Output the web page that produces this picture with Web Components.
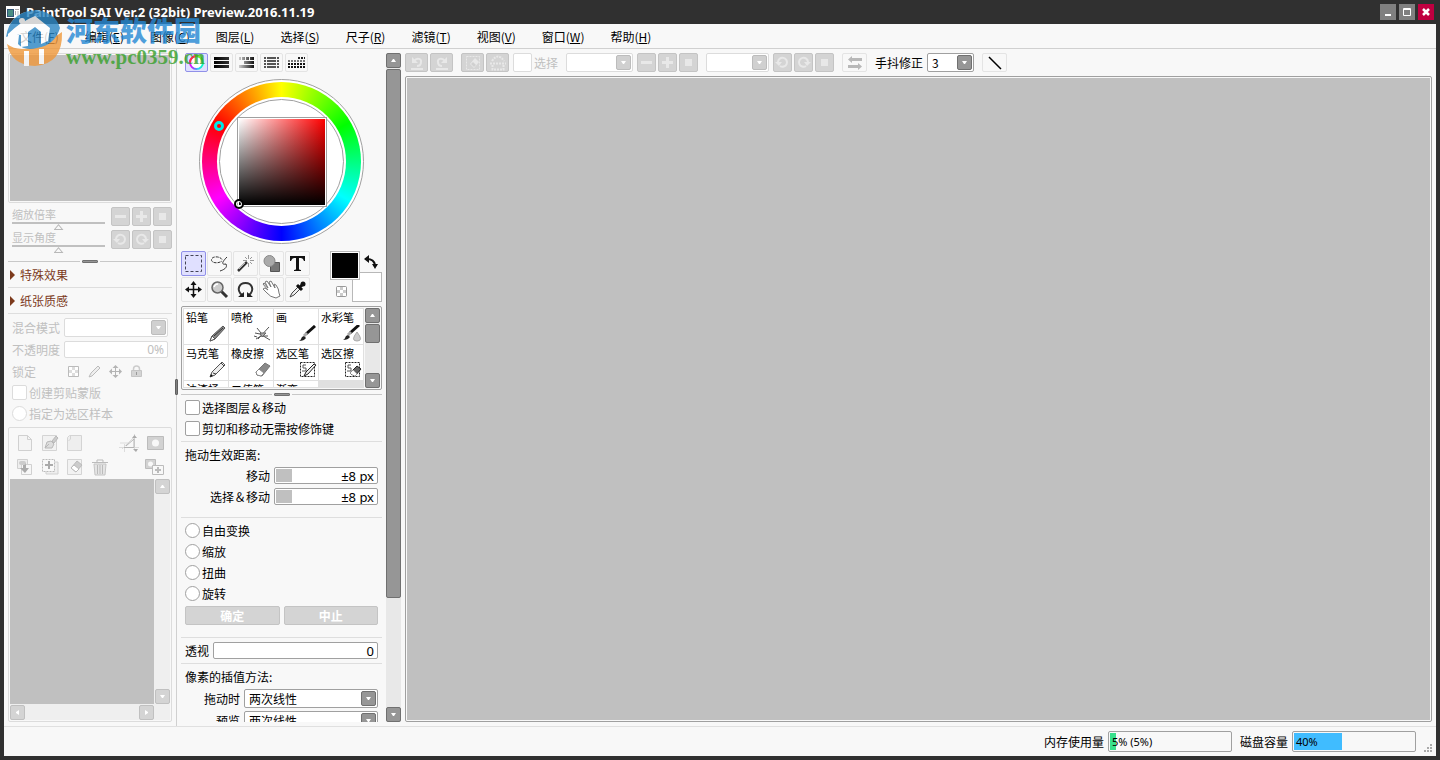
<!DOCTYPE html>
<html lang="zh-CN">
<head>
<meta charset="utf-8">
<title>PaintTool SAI Ver.2</title>
<style>
    html, body {
        height: 100%;
        margin: 0;
    }

    body {
        background: #303030;
        font-family: "Noto Sans CJK SC", sans-serif;
        font-size: 12px;
        overflow: hidden;
    }
</style>
</head>
<body>
<sai-window></sai-window>

<script>
// name: [width, height, svg body]
const ICONS = {
    app: [14, 12, '<path d="M0 0h14v12H0z" fill="#fff"/><path d="M1 3h7v8H1z" fill="#357"/><path d="M2 4h5v6H2z" fill="#4a8d83"/><path d="M9 3h4v1H9zM9 5h1v4H9z" fill="#aaa"/><path d="M11 5h2v6h-2z" fill="#ddd"/>'],
    min: [16, 16, '<path d="M5 10h6v2H5z" fill="#fff"/>'],
    max: [16, 16, '<path d="M4.5 4.5h7v7h-7zM4 5.5h8" fill="none" stroke="#fff"/>'],
    close: [16, 16, '<path d="M5 5l6 6M11 5l-6 6" stroke="#fff" stroke-width="2.5"/>'],
    ring: [19, 17, '<defs><linearGradient id="a" x2="1" y2="0"><stop stop-color="#e0f"/><stop offset=".3" stop-color="#85f"/><stop offset=".6" stop-color="#3cf"/><stop offset="1" stop-color="#0fb"/></linearGradient></defs><circle cx="9.5" cy="8.5" r="6.5" fill="#fff" stroke="url(#a)" stroke-width="2"/><path d="M3 8.5A6.500 6.500 0 0 1 9 2" fill="none" stroke="#f34" stroke-width="2"/><path d="M9 2a6.5 6.5 0 0 1 6 4" fill="none" stroke="#7e2" stroke-width="2"/>'],
    bars: [17, 13, '<defs><linearGradient id="a"><stop stop-color="#000"/><stop offset="1" stop-color="#333"/></linearGradient></defs><path d="M1 1h15v3H1zM1 5h15v3H1zM1 9h15v3H1z" fill="url(#a)"/>'],
    mixer: [17, 13, '<defs><linearGradient id="a"><stop stop-color="#ccc"/><stop offset="1" stop-color="#111"/></linearGradient></defs><path d="M1 1h15v3H1zM1 5h15v3H1zM1 9h15v3H1z" fill="url(#a)"/><path d="M3 1h1v3H3zM7 1h1v3H7zM11 1h1v3h-1zM1 5h5v3H1z" fill="#f8f8f8"/>'],
    gridlines: [17, 13, '<path d="M1 2h15M1 5h15M1 8h15M1 11h15" stroke="#555" stroke-width="2" stroke-dasharray="2 1 9 1 2 1"/>'],
    swatches: [17, 13, '<path d="M10 2h7" stroke="#222" stroke-width="2" stroke-dasharray="2 1"/><path d="M0 5h17" stroke="#777" stroke-width="2" stroke-dasharray="2 1"/><path d="M0 8h17M0 11h17" stroke="#111" stroke-width="2" stroke-dasharray="2 1"/>'],
    undo: [18, 16, '<path d="M4 2v6h6z" fill="#e8e8e8"/><path d="M6 6c3-4 8-2 7 1 0 3-2 4-4 4M3 14h12" fill="none" stroke="#e8e8e8" stroke-width="2"/>'],
    redo: [18, 16, '<path d="M14 2v6H8z" fill="#e8e8e8"/><path d="M12 6C9 2 4 4 5 7c0 3 2 4 4 4M3 14h12" fill="none" stroke="#e8e8e8" stroke-width="2"/>'],
    deselect: [18, 16, '<path d="M2.5 1.5h13v13h-13z" fill="none" stroke="#e8e8e8" stroke-dasharray="2 1"/><path d="M6 9l5-6 4 4-5 6z" fill="#e8e8e8"/><path d="M7 9l2-2 3 3-2 2z" fill="#d0d0d0"/>'],
    invert: [18, 16, '<path d="M1 8.500h16M3 6q6-9 12 0M3.5 10v4.500h11V10" fill="none" stroke="#e8e8e8" stroke-width="2" stroke-dasharray="2 1"/>'],
    minus: [15, 15, '<path d="M2 6h11v3H2z" fill="#e8e8e8"/>'],
    plus: [15, 15, '<path d="M2 6h11v3H2zM6 2h3v11H6z" fill="#e8e8e8"/>'],
    square: [15, 15, '<path d="M4 4h7v7H4z" fill="#e8e8e8"/>'],
    ccw: [15, 15, '<path d="M3 7a4.5 4.5 0 1 1 2 4" fill="none" stroke="#e8e8e8" stroke-width="2"/><path d="M0 7h7l-3 4z" fill="#e8e8e8"/>'],
    cw: [15, 15, '<path d="M12 7a4.5 4.5 0 1 0-2 4" fill="none" stroke="#e8e8e8" stroke-width="2"/><path d="M8 7h7l-4 4z" fill="#e8e8e8"/>'],
    swaparrows: [16, 14, '<path d="M5 0v2h10v3H5v2L1 3.500zM11 7v2H1v3h10v2l4-3.500z" fill="#b8b8b8"/>'],
    line: [16, 14, '<path d="M2 1l12 12" stroke="#000" stroke-width="1.5"/>'],
    select: [19, 19, '<path d="M1.5 1.5h16v16h-16z" fill="none" stroke="#445" stroke-dasharray="3 2"/>'],
    lasso: [19, 19, '<path d="M12 5.5C10 2 2 2 1.5 5.5S8 10 12 7" fill="none" stroke="#333" stroke-dasharray="3 1"/><path d="M17 3c-5 5-6 8-1 7 2 4-3 6-6 7" fill="none" stroke="#333"/>'],
    wand: [19, 19, '<path d="M2 17L11 8" stroke="#333" stroke-width="2.5"/><path d="M3 15l6-6" stroke="#bbb"/><path d="M12.5 1v4M12.5 9v4M7 6.5h4M14 6.5h4M9 3l2 2M16 3l-2 2M16 10l-2-2" stroke="#999"/>'],
    shapes: [19, 19, '<path d="M8.5 8.5h9v9h-9z" fill="#777" stroke="#555"/><circle cx="7.5" cy="7" r="5.5" fill="#aaa" stroke="#888"/>'],
    text: [19, 19, '<path d="M2 2h15v5h-1q-1-3-3-3h-2v11q0 1 2 1v1H6v-1q2 0 2-1V4H6Q4 4 3 7H2z" fill="#111"/>'],
    move: [19, 19, '<path d="M9.5 3v13M3 9.5h13" stroke="#111" stroke-width="1.5"/><path d="M9.5 1l3 4h-6zM9.5 18l3-4h-6zM1 9.5l4-3v6zM18 9.5l-4-3v6z" fill="#111"/>'],
    zoom: [19, 19, '<path d="M11 11l6 6" stroke="#333" stroke-width="3"/><circle cx="7.5" cy="7.5" r="5.5" fill="#ccc" stroke="#666" stroke-width="1.5"/><path d="M4 7q1-3 4-3" fill="none" stroke="#fff" stroke-width="1.5"/>'],
    rotate: [19, 19, '<path d="M6 15C0 10 3 3 9.5 3S19 10 13 15" fill="none" stroke="#333" stroke-width="2"/><path d="M2 17h6v-5zM17 17h-6v-5z" fill="#222"/>'],
    hand: [19, 19, '<path d="M2 3l4 5-3-6 2-1 4 6-2-5 2-1 4 7-1-4 2 1q3 4 3 8l1 3-4 2q-6-1-9-5L1 9l2-1 3 2-5-6z" fill="#fff" stroke="#777"/>'],
    picker: [19, 19, '<path d="M2 17l2-4 7-7 2 2-7 7z" fill="#eee" stroke="#444"/><path d="M9 5l5 5M11 8l4-4" stroke="#111" stroke-width="3"/><circle cx="15" cy="4" r="2.5" fill="#111"/>'],
    pencil: [19, 17, '<path d="M2 16l2-5L15 1l2 2L7 14z" fill="#888" stroke="#555"/><path d="M4 11l3 3-5 2z" fill="#fff" stroke="#555"/><path d="M6 11l9-8" stroke="#333"/>'],
    airbrush: [19, 17, '<path d="M2 8l5 1 10 6M5 14L16 2M8 8L4 3M3 14l5-3M1 11l3 1M9 11h6" fill="none" stroke="#555"/><path d="M7 8h6l-4 4z" fill="#aaa" stroke="#666"/>'],
    brush: [19, 17, '<path d="M8 9L17 1" stroke="#111" stroke-width="3"/><path d="M6 11l3-3" stroke="#aaa" stroke-width="3"/><path d="M1 16q2-1 3-4l2-1 2 2q-2 3-7 3" fill="#222"/>'],
    water: [19, 17, '<path d="M7 8L16 0" stroke="#111" stroke-width="3"/><path d="M5 10l3-3" stroke="#aaa" stroke-width="3"/><path d="M0 15q2-1 3-4l2-1 2 2q-2 3-7 3" fill="#222"/><path d="M14 7q-7 9 0 9t0-9" fill="#ccc" stroke="#aaa"/>'],
    marker: [19, 17, '<path d="M2 16l2-5L14 1l3 3L7 14z" fill="#eee" stroke="#555"/><path d="M5 12l3 1M13 2l3 3" stroke="#444"/><path d="M2 16l1-3 2 2z" fill="#111"/>'],
    eraser: [19, 17, '<path d="M3 11L12 2l5 3-8 10-5-1z" fill="#888" stroke="#777"/><path d="M3 11l3-3 5 4-3 3-4-1z" fill="#fff" stroke="#888"/>'],
    selpen: [19, 17, '<path d="M2.5 1.5h14v14h-14z" fill="none" stroke="#222" stroke-dasharray="2 1"/><path d="M8 4H5v3h3v3H4" fill="none" stroke="#555"/><path d="M6 15l2-4 8-8 2 1-8 9z" fill="#eee" stroke="#222"/>'],
    seleraser: [19, 17, '<path d="M2.5 1.5h14v14h-14z" fill="none" stroke="#222" stroke-dasharray="2 1"/><path d="M8 4H5v3h3v3H4" fill="none" stroke="#555"/><path d="M8 11l6-6 4 3-6 7-4-2z" fill="#666" stroke="#222"/><path d="M8 11l2-2 4 4-2 2-4-2z" fill="#fff"/>'],
    swapcolor: [14, 14, '<path d="M3 4q7 0 8 6" fill="none" stroke="#111" stroke-width="2"/><path d="M5 0v8L0 4zM8 9h6l-3 5z" fill="#111"/>'],
    checker: [11, 11, '<path d="M.5.5h10v10H.5z" fill="#fff" stroke="#999"/><path d="M4 1h3v3H4zM1 4h3v3H1zM7 4h3v3H7zM4 7h3v3H4z" fill="#ccc"/>'],
    lockalpha: [13, 13, '<path d="M1.5 1.5h10v10h-10z" fill="#fff" stroke="#bbb"/><path d="M5 2h3v3H5zM2 5h3v3H2zM8 5h3v3H8zM5 8h3v3H5z" fill="#ddd"/>'],
    lockpen: [13, 13, '<path d="M1 12l2-4 7-7 2 2-8 8z" fill="#eee" stroke="#bbb"/>'],
    lockmove: [13, 13, '<path d="M6.5 2v9M2 6.5h9" stroke="#b4b4b4"/><path d="M6.5 0l3 3h-6zM6.5 13l3-3h-6zM0 6.5l3-3v6zM13 6.5l-3-3v6z" fill="#b4b4b4"/>'],
    padlock: [13, 13, '<path d="M3.5 6V4q0-3 3-3t3 3v2" fill="none" stroke="#ccc" stroke-width="1.5"/><path d="M1.5 5.5h10v6h-10z" fill="#d4d4d4" stroke="#c4c4c4"/><path d="M6 7h1v3H6z" fill="#999"/>'],
    page: [18, 18, '<path d="M2.5 1.5h9l4 4v11h-13z" fill="#f4f4f4" stroke="#d0d0d0"/><path d="M11.5 1.5v4h4" fill="none" stroke="#d0d0d0"/>'],
    penpage: [18, 18, '<path d="M1.5 1.5h14v15h-14z" fill="#f2f2f2" stroke="#d4d4d4"/><path d="M4 14l2-6 4-1 3 3-2 4z" fill="#ddd" stroke="#b8b8b8"/><path d="M4 14l4-4M11 7l4-5 2 2-4 5z" fill="#ccc" stroke="#b8b8b8"/>'],
    folder: [18, 18, '<path d="M1.5 3.5l2-2h12v15h-14z" fill="#eee" stroke="#d4d4d4"/><path d="M4.5 2v3l-2 2" fill="none" stroke="#d4d4d4"/>'],
    ruler: [20, 18, '<path d="M0 13.5h20M5.5 10v8M15.5 0v16M3 15L15 3M1 9h9" stroke="#dcdcdc"/><path d="M5 13.5h10v-9M7 12l8-7" fill="none" stroke="#b4b4b4"/><path d="M13 4l2.5-3L18 4zM14 15h5l-2 3z" fill="#aaa"/>'],
    mask: [18, 18, '<path d="M1.5 2.5h16v13h-16z" fill="#d2d2d2" stroke="#bcbcbc"/><circle cx="9.5" cy="9" r="3.5" fill="#f8f8f8"/>'],
    merge: [18, 18, '<path d="M1.5 1.5h10v9h-10z" fill="#eee" stroke="#d0d0d0"/><path d="M5.5 6.5h10v10h-10z" fill="#f6f6f6" stroke="#d0d0d0"/><path d="M7 5h3v5h3l-4 5-5-5h3z" fill="#aaa"/><rect x="3" y="3" width="7" height="4" rx="2" fill="#ccc"/>'],
    addlayer: [18, 18, '<path d="M5 4h12v12H5z" fill="#eee" stroke="#d0d0d0"/><path d="M1.5 1.5h12v12h-12z" fill="#f8f8f8" stroke="#bbb" stroke-dasharray="2 1"/><path d="M4 6h3V3h2v3h3v2H9v3H7V8H4z" fill="#aaa"/>'],
    clearlayer: [18, 18, '<path d="M1.5 1.5h14v15h-14z" fill="#f2f2f2" stroke="#d4d4d4"/><path d="M5 10l6-7 5 4-6 7z" fill="#ccc" stroke="#bbb"/><path d="M5 10l3-3 5 4-3 3z" fill="#fff" stroke="#bbb"/>'],
    trash: [18, 18, '<path d="M3 6h12l-1 11H4z" fill="#e4e4e4" stroke="#c4c4c4"/><path d="M1 4.5h16M6 4V2h6v2M6.5 7v9M9 7v9M11.5 7v9" fill="none" stroke="#bbb"/>'],
    addmask: [20, 18, '<path d="M1.5 1.5h10v9h-10z" fill="#d2d2d2" stroke="#bcbcbc"/><circle cx="6.5" cy="6" r="2.5" fill="#f8f8f8"/><path d="M8.5 7.5h11v9h-11z" fill="#f8f8f8" stroke="#bcbcbc"/><path d="M11 11h2V9h2v2h2v2h-2v2h-2v-2h-2z" fill="#bbb"/>'],
    up: [5, 3, '<path d="M2 0h1l2 3H0z" fill="#fff"/>'],
    down: [5, 3, '<path d="M0 0h5L3 3H2z" fill="#fff"/>'],
    left: [3, 5, '<path d="M0 2v1l3 2V0z" fill="#fff"/>'],
    right: [3, 5, '<path d="M3 2v1L0 5V0z" fill="#fff"/>'],
    grip: [9, 9, '<path d="M6 0h2v2H6zM3 3h2v2H3zM6 3h2v2H6zM0 6h2v2H0zM3 6h2v2H3zM6 6h2v2H6z" fill="#aaa"/>'],
    watermark: [58, 60, '<circle cx="28" cy="30" r="27" fill="#fff"/><path d="M2 36Q20 50 57 24 58 56 30 58 6 57 2 36z" fill="#f0983a"/><path d="M19 43h5v15h-5zM34 41h5v15h-5z" fill="#fff"/><path d="M1 29Q5 3 32 2q19 3 23 18-5 17-23 20-13 3-19-4l1-9q-8-1-13 2z" fill="#2b86c4"/><path d="M3 26Q15 14 30 8l15 12-2 13-7 3V24l-6-5-7 5v14l-7 1V27q-7-1-13 3z" fill="#fff"/><circle cx="17" cy="13" r="3" fill="#fff"/>']
};

const BASE = `
    :host, * { box-sizing: border-box; }
    button, input, select { font: inherit; color: inherit; margin: 0; padding: 0; outline: 0; }
`;

// Base class: renders a template string into an open shadow root
class SaiElement extends HTMLElement {
    connectedCallback() {
        if (this.shadowRoot) return;
        this.attachShadow({ mode: 'open' });
        this.shadowRoot.innerHTML = `<style>${BASE}</style>` + this.render();
    }

    attr(name, fallback = '') {
        return this.getAttribute(name) ?? fallback;
    }

    get off() {
        return this.hasAttribute('disabled') ? 'disabled' : '';
    }
}

class SaiIcon extends SaiElement {
    render() {
        const [w, h, body] = ICONS[this.attr('name')];
        return `
            <style>
                :host { display: inline-flex; flex: none; }
                svg { display: block; }
            </style>
            <svg width="${w}" height="${h}" viewBox="0 0 ${w} ${h}" aria-hidden="true">${body}</svg>`;
    }
}

// kind: tool | mode | wide | small | ghost | plain | scroll | title | push
class SaiButton extends SaiElement {
    render() {
        return `
            <style>
                :host { display: flex; flex: none; }
                button { display: flex; flex: 1; align-items: center; justify-content: center; height: 19px; border: 1px solid #e4e4e4; border-radius: 2px; background: #f8f8f8; overflow: hidden; }
                :host([kind=tool]) button { width: 25px; height: 25px; }
                :host([kind=mode]) button { width: 23px; }
                :host([kind=wide]) button, :host([kind=small]) button { width: 23px; background: #d4d4d4; border-color: #c4c4c4; }
                :host([kind=small]) button { width: 19px; }
                :host([kind=ghost]) button { width: 25px; }
                :host([kind=plain]) button { width: auto; height: auto; border: 0; background: none; }
                :host([kind=scroll]) button { width: 15px; height: 15px; background: #969696; border-color: #707070; }
                :host([kind=scroll][disabled]) button { background: #d4d4d4; border-color: #c0c0c0; }
                :host([kind=title]) button { width: 16px; height: 16px; border: 0; border-radius: 0; background: #808080; }
                :host([kind=title][danger]) button { background: #c00040; }
                :host([kind=push]) { flex: 1; }
                :host([kind=push]) button { background: #d4d4d4; border-color: #c4c4c4; color: #fff; font-weight: bold; line-height: 17px; }
                :host([on]) button { background: #e0e0ff; border-color: #9090e8; }
            </style>
            <button type="button" ${this.off} ${this.attr('label') ? `aria-label="${this.attr('label')}"` : ''}>
                ${this.attr('icon') ? `<sai-icon name="${this.attr('icon')}"></sai-icon>` : '<slot></slot>'}
            </button>`;
    }
}

class SaiSelect extends SaiElement {
    render() {
        return `
            <style>
                :host { display: flex; align-items: center; }
                label { white-space: nowrap; text-align: right; width: var(--label-width, auto); padding-right: 4px; flex: none; }
                label:empty { display: none; }
                div { display: grid; flex: 1; min-width: 0; height: 19px; background: #fff; border: 1px solid #a0a0a0; border-radius: 2px; align-items: center; }
                select { grid-area: 1 / 1; appearance: none; border: 0; background: none; width: 100%; height: 17px; padding-left: 4px; opacity: 1; }
                i { grid-area: 1 / 1; justify-self: end; width: 15px; height: 15px; margin-right: 1px; border: 1px solid #707070; border-radius: 2px; background: #969696; display: flex; align-items: center; justify-content: center; pointer-events: none; }
                :host([disabled]) { color: #c0c0c0; }
                :host([disabled]) div { border-color: #dcdcdc; }
                :host([disabled]) i { background: #d0d0d0; border-color: #bcbcbc; }
            </style>
            <label for="s">${this.attr('label')}</label>
            <div>
                <select id="s" ${this.off} ${this.attr('label') ? '' : `aria-label="${this.attr('hint', '列表')}"`}><option>${this.attr('value')}</option></select>
                <i><sai-icon name="down"></sai-icon></i>
            </div>`;
    }
}

class SaiField extends SaiElement {
    render() {
        return `
            <style>
                :host { display: flex; align-items: center; }
                label { white-space: nowrap; text-align: right; width: var(--label-width, auto); padding-right: 4px; flex: none; }
                input { flex: 1; min-width: 0; width: 0; height: 17px; border: 1px solid #a0a0a0; border-radius: 2px; background: #fff; text-align: right; padding-right: 3px; font: 13px "Noto Sans", sans-serif; }
                :host([gauge]) input { background: linear-gradient(#c0c0c0, #c0c0c0) 1px 1px / 16px 13px no-repeat #fff; }
                :host([disabled]) { color: #c0c0c0; }
                :host([disabled]) input { border-color: #dcdcdc; font-size: 12px; }
            </style>
            <label for="f">${this.attr('label')}</label>
            <input id="f" type="text" value="${this.attr('value')}" ${this.off}>`;
    }
}

class SaiCheck extends SaiElement {
    render() {
        const type = this.attr('type', 'checkbox');
        return `
            <style>
                :host { display: flex; align-items: center; height: 21px; }
                label { display: flex; align-items: center; gap: 2px; white-space: nowrap; }
                input { appearance: none; width: 15px; height: 15px; border: 1px solid #a0a0a0; border-radius: 2px; background: #fff; flex: none; }
                input[type=radio] { border-radius: 50%; }
                :host([large]) input { width: 19px; height: 19px; }
                :host([disabled]) { color: #c0c0c0; }
                :host([disabled]) input { border-color: #dcdcdc; }
            </style>
            <label><input type="${type}" ${this.off}><slot></slot></label>`;
    }
}

class SaiSlider extends SaiElement {
    render() {
        return `
            <style>
                :host { display: flex; flex-direction: column; flex: 1; color: #c0c0c0; font-size: 11px; }
                label { line-height: 15px; }
                input { appearance: none; display: block; width: 100%; height: 8px; background: linear-gradient(#c0c0c0, #c0c0c0) top / 100% 2px no-repeat; }
                input::-webkit-slider-thumb {
                    appearance: none;
                    width: 10px;
                    height: 6px;
                    margin-top: 2px;
                    background: #b8b8b8;
                    clip-path: polygon(50% 0, 100% 100%, 0 100%, 50% 0, 50% 25%, 20% 84%, 80% 84%, 50% 25%);
                }
            </style>
            <label for="r">${this.attr('label')}</label>
            <input id="r" type="range" value="50" disabled>`;
    }
}

class SaiRule extends SaiElement {
    render() {
        return `
            <style>
                :host { display: flex; align-items: center; height: 5px; flex: none; gap: 2px; }
                :host::before, :host::after { content: ""; flex: 1; height: 1px; background: #dedede; }
                :host::after { display: none; }
                :host([grip]) { height: 7px; padding-top: 2px; }
                :host([grip])::before, :host([grip])::after { display: block; background: #c8c8c8; }
                i { display: none; width: 16px; height: 3px; background: #969696; border: 1px solid #707070; border-radius: 1px; }
                :host([grip]) i { display: block; }
            </style>
            <i></i>`;
    }
}

class SaiScroll extends SaiElement {
    render() {
        const [thumb, rest] = this.attr('thumb', '0 1').split(' ');
        const flat = this.hasAttribute('horizontal');
        return `
            <style>
                :host { display: flex; flex-direction: ${flat ? 'row' : 'column'}; background: #e8e8e8; flex: none; }
                :host([disabled]) { background: #efefef; }
                .thumb { flex: ${thumb}; background: #969696; border: ${thumb > 0 ? 1 : 0}px solid #707070; border-radius: 2px; margin: 1px 0; }
                .rest { flex: ${rest}; }
            </style>
            <sai-button kind="scroll" icon="${flat ? 'left' : 'up'}" label="${flat ? '向左' : '向上'}" ${this.off}></sai-button>
            <div class="thumb"></div>
            <div class="rest"></div>
            <sai-button kind="scroll" icon="${flat ? 'right' : 'down'}" label="${flat ? '向右' : '向下'}" ${this.off}></sai-button>`;
    }
}

class SaiFold extends SaiElement {
    render() {
        return `
            <style>
                :host { display: flex; height: 21px; color: #7c3a1c; }
                button { display: flex; align-items: center; gap: 5px; border: 0; background: none; padding-left: 2px; }
                button::before { content: ""; border: 5px solid transparent; border-left-color: #7c3a1c; border-right: 0; }
            </style>
            <button type="button" aria-expanded="false"><slot></slot></button>`;
    }
}

class SaiMeter extends SaiElement {
    render() {
        return `
            <style>
                :host { display: flex; align-items: center; gap: 4px; white-space: nowrap; }
                div { width: 124px; height: 21px; border: 1px solid #a0a0a0; border-radius: 2px; font: 11px/17px "Noto Sans", sans-serif; padding: 1px; }
                p { margin: 0; padding-left: 2px; background: linear-gradient(var(--fill), var(--fill)) left / ${this.attr('value')}% 100% no-repeat; }
            </style>
            <span>${this.attr('label')}</span>
            <div role="meter" aria-label="${this.attr('label')}" aria-valuenow="${this.attr('value')}"><p><slot></slot></p></div>`;
    }
}

class SaiWheel extends SaiElement {
    render() {
        return `
            <style>
                :host { display: grid; place-items: center; width: 165px; height: 165px; border: 1px solid #a0a0a0; border-radius: 50%; background: #fff; position: relative; }
                .hue { display: grid; place-items: center; width: 159px; height: 159px; border-radius: 50%; background: conic-gradient(#ff0, #0f0, #0ff, #00f, #f0f, #f00, #ff0); }
                .hole { display: grid; place-items: center; width: 129px; height: 129px; border-radius: 50%; background: #fff; }
                .inner { display: grid; place-items: center; width: 125px; height: 125px; border: 1px solid #a0a0a0; border-radius: 50%; }
                .tone { width: 90px; height: 90px; border: 1px solid #a0a0a0; padding: 1px; background: linear-gradient(to top, #000, transparent) content-box, linear-gradient(to right, #fff, #f00) content-box, #fff; }
                b { position: absolute; width: 10px; height: 10px; border-radius: 50%; }
                .h { left: 14px; top: 41px; border: 3px solid #00e8e8; }
                .t { left: 34px; top: 119px; border: 2px solid #000; box-shadow: inset 0 0 0 1px #fff; }
            </style>
            <div class="hue"><div class="hole"><div class="inner"><div class="tone"></div></div></div></div>
            <b class="h"></b><b class="t"></b>`;
    }
}

class SaiBrush extends SaiElement {
    render() {
        return `
            <style>
                :host { display: block; background: #fff; }
                button { display: flex; flex-direction: column; width: 100%; height: 35px; border: 0; background: none; font-size: 11px; line-height: 16px; padding-left: 2px; white-space: nowrap; align-items: flex-start; }
                sai-icon { align-self: flex-end; margin-right: 1px; }
            </style>
            <button type="button"><slot></slot>${this.attr('icon') ? `<sai-icon name="${this.attr('icon')}"></sai-icon>` : ''}</button>`;
    }
}

class SaiNavigator extends SaiElement {
    render() {
        const row = (label, a, b) => `
            <div class="row">
                <sai-slider label="${label}"></sai-slider>
                <sai-button kind="small" icon="${a}" label="${label} ${a}" disabled></sai-button>
                <sai-button kind="small" icon="${b}" label="${label} ${b}" disabled></sai-button>
                <sai-button kind="small" icon="square" label="${label} reset" disabled></sai-button>
            </div>`;
        return `
            <style>
                :host { display: flex; flex-direction: column; }
                .view { height: 150px; border: 1px solid #dcdcdc; border-radius: 2px; padding: 1px; background: #c0c0c0 content-box; margin-bottom: 4px; }
                .row { display: flex; align-items: flex-start; gap: 2px; height: 23px; padding-left: 4px; }
                sai-slider { margin-right: 4px; }
                .grip { margin-top: 4px; }
            </style>
            <div class="view"></div>
            ${row('缩放倍率', 'minus', 'plus')}
            ${row('显示角度', 'ccw', 'cw')}
            <sai-rule grip class="grip"></sai-rule>`;
    }
}

class SaiLayers extends SaiElement {
    render() {
        const btn = (icon, label) => `<sai-button kind="plain" icon="${icon}" label="${label}" disabled></sai-button>`;
        return `
            <style>
                :host { display: flex; flex-direction: column; flex: 1; min-height: 0; color: #c0c0c0; }
                .form { display: flex; flex-direction: column; padding: 0 4px; --label-width: 52px; }
                sai-select, sai-field, .lock { height: 22px; }
                .lock { display: flex; align-items: center; gap: 8px; }
                .lock span { width: 47px; }
                .box { display: flex; flex-direction: column; flex: 1; min-height: 0; border: 1px solid #dcdcdc; border-radius: 2px; padding: 3px 1px 1px; margin-top: 3px; }
                .tools { display: flex; align-items: center; height: 24px; gap: 7px; padding: 0 6px; }
                .tools .push { margin-left: auto; }
                .list { display: grid; grid-template-columns: 1fr 15px; grid-template-rows: 1fr 15px; gap: 1px; flex: 1; background: #efefef; }
                .view { background: #c0c0c0; }
            </style>
            <sai-fold>特殊效果</sai-fold>
            <sai-rule></sai-rule>
            <sai-fold>纸张质感</sai-fold>
            <sai-rule></sai-rule>
            <div class="form">
                <sai-select label="混合模式" disabled></sai-select>
                <sai-field label="不透明度" value="0%" disabled></sai-field>
                <div class="lock"><span>锁定</span>
                    ${btn('lockalpha', '锁定透明')}${btn('lockpen', '锁定绘画')}${btn('lockmove', '锁定移动')}${btn('padlock', '全部锁定')}
                </div>
                <sai-check disabled>创建剪贴蒙版</sai-check>
                <sai-check type="radio" disabled>指定为选区样本</sai-check>
            </div>
            <div class="box">
                <div class="tools">
                    ${btn('page', '新建图层')}${btn('penpage', '新建钢笔图层')}${btn('folder', '新建图层组')}
                    <span class="push"></span>${btn('ruler', '尺子')}${btn('mask', '蒙版')}
                </div>
                <div class="tools">
                    ${btn('merge', '向下合并')}${btn('addlayer', '合并')}${btn('clearlayer', '清除图层')}${btn('trash', '删除图层')}
                    <span class="push"></span>${btn('addmask', '新建蒙版')}
                </div>
                <div class="list">
                    <div class="view"></div>
                    <sai-scroll disabled></sai-scroll>
                    <sai-scroll horizontal disabled></sai-scroll>
                </div>
            </div>`;
    }
}

class SaiColorPanel extends SaiElement {
    render() {
        const modes = ['ring', 'bars', 'mixer', 'gridlines', 'swatches'];
        return `
            <style>
                :host { display: flex; flex-direction: column; }
                .modes { display: flex; gap: 2px; height: 20px; padding-left: 4px; margin-bottom: 6px; }
                sai-wheel { align-self: center; }
            </style>
            <div class="modes">${modes.map((m, i) => `<sai-button kind="mode" icon="${m}" label="${m}" ${i ? '' : 'on'}></sai-button>`).join('')}</div>
            <sai-wheel></sai-wheel>`;
    }
}

class SaiToolPanel extends SaiElement {
    render() {
        const tools = ['select', 'lasso', 'wand', 'shapes', 'text', 'move', 'zoom', 'rotate', 'hand', 'picker'];
        const brushes = [
            ['铅笔', 'pencil'], ['喷枪', 'airbrush'], ['画', 'brush'], ['水彩笔', 'water'],
            ['马克笔', 'marker'], ['橡皮擦', 'eraser'], ['选区笔', 'selpen'], ['选区擦', 'seleraser'],
            ['油漆桶', ''], ['二值笔', ''], ['渐变', '']
        ];
        return `
            <style>
                :host { display: flex; flex-direction: column; }
                .top { display: flex; justify-content: space-between; margin: 7px 0 4px; }
                .tools { display: grid; grid-template-columns: repeat(5, 25px); gap: 1px; }
                .colors { display: grid; grid-template-columns: 22px 8px 22px; grid-template-rows: 21px 8px 22px; }
                .fg, .bg { border: 1px solid #b8b8b8; padding: 1px; }
                .fg { grid-area: 1 / 1 / 3 / 3; background: #000; box-shadow: inset 0 0 0 1px #fff; z-index: 1; }
                .bg { grid-area: 2 / 2 / 4 / 4; background: #fff; }
                .swap { grid-area: 1 / 3; place-self: center; }
                .clear { grid-area: 3 / 1; place-self: center; }
                .brushes { display: flex; height: 84px; border: 1px solid #a0a0a0; border-radius: 2px; padding: 1px; }
                .cells { flex: 1; display: grid; grid-template-columns: repeat(4, 1fr); grid-auto-rows: 35px; gap: 1px; background: #e0e0e0; border: 1px solid #e0e0e0; overflow: hidden; margin-right: 1px; }
            </style>
            <div class="top">
                <div class="tools">${tools.map((t, i) => `<sai-button kind="tool" icon="${t}" label="${t}" ${i ? '' : 'on'}></sai-button>`).join('')}</div>
                <div class="colors">
                    <div class="fg"></div><div class="bg"></div>
                    <sai-button class="swap" kind="plain" icon="swapcolor" label="交换颜色"></sai-button>
                    <sai-button class="clear" kind="plain" icon="checker" label="透明色"></sai-button>
                </div>
            </div>
            <div class="brushes">
                <div class="cells">${brushes.map(([n, i]) => `<sai-brush icon="${i}">${n}</sai-brush>`).join('')}</div>
                <sai-scroll thumb="18 32"></sai-scroll>
            </div>
            <sai-rule grip></sai-rule>`;
    }
}

class SaiOptions extends SaiElement {
    render() {
        return `
            <style>
                :host { display: flex; flex-direction: column; }
                .group { display: flex; flex-direction: column; padding: 0 4px; }
                .space { padding-bottom: 8px; }
                .drag { --label-width: 89px; }
                .pixels { --label-width: 59px; }
                span { line-height: 21px; }
                sai-field { height: 21px; }
                sai-select { height: 22px; }
                .actions { display: flex; gap: 4px; padding: 2px 0 10px; }
            </style>
            <div class="group">
                <sai-check>选择图层＆移动</sai-check>
                <sai-check>剪切和移动无需按修饰键</sai-check>
            </div>
            <sai-rule></sai-rule>
            <div class="group drag space">
                <span>拖动生效距离:</span>
                <sai-field label="移动" value="±8 px" gauge></sai-field>
                <sai-field label="选择＆移动" value="±8 px" gauge></sai-field>
            </div>
            <sai-rule></sai-rule>
            <div class="group">
                <sai-check type="radio">自由变换</sai-check>
                <sai-check type="radio">缩放</sai-check>
                <sai-check type="radio">扭曲</sai-check>
                <sai-check type="radio">旋转</sai-check>
                <div class="actions">
                    <sai-button kind="push" disabled>确定</sai-button>
                    <sai-button kind="push" disabled>中止</sai-button>
                </div>
            </div>
            <sai-rule></sai-rule>
            <div class="group"><sai-field label="透视" value="0"></sai-field></div>
            <sai-rule></sai-rule>
            <div class="group pixels">
                <span>像素的插值方法:</span>
                <sai-select label="拖动时" value="两次线性"></sai-select>
                <sai-select label="预览" value="两次线性"></sai-select>
            </div>`;
    }
}

class SaiToolbar extends SaiElement {
    render() {
        const btn = (kind, icon) => `<sai-button kind="${kind}" icon="${icon}" label="${icon}" disabled></sai-button>`;
        return `
            <style>
                :host { display: flex; align-items: center; gap: 8px; height: 19px; margin-bottom: 4px; }
                div { display: flex; align-items: center; gap: 2px; }
                .near { gap: 4px; }
                .zoom { width: 67px; }
                .angle { width: 63px; }
                .steady { width: 99px; }
            </style>
            <div>${btn('wide', 'undo')}${btn('wide', 'redo')}</div>
            <div class="near"><div>${btn('wide', 'deselect')}${btn('wide', 'invert')}</div><sai-check large disabled>选择</sai-check></div>
            <div class="near"><sai-select class="zoom" hint="缩放倍率" disabled></sai-select>
                <div>${btn('small', 'minus')}${btn('small', 'plus')}${btn('small', 'square')}</div></div>
            <div class="near"><sai-select class="angle" hint="显示角度" disabled></sai-select>
                <div>${btn('small', 'ccw')}${btn('small', 'cw')}${btn('small', 'square')}</div></div>
            ${btn('ghost', 'swaparrows')}
            <sai-select class="steady" label="手抖修正" value="3"></sai-select>
            <sai-button kind="ghost" icon="line" label="直线"></sai-button>`;
    }
}

class SaiMenu extends SaiElement {
    render() {
        const items = [['文件', 'F'], ['编辑', 'E'], ['图像', 'C'], ['图层', 'L'], ['选择', 'S'], ['尺子', 'R'], ['滤镜', 'T'], ['视图', 'V'], ['窗口', 'W'], ['帮助', 'H']];
        return `
            <style>
                :host { display: flex; height: 25px; padding-left: 3px; border-bottom: 1px solid #d0d0d0; background: #f8f8f8; flex: none; }
                button { border: 0; background: none; padding: 1px 13px 0; line-height: 23px; white-space: nowrap; }
            </style>
            ${items.map(([t, k]) => `<button type="button">${t}(<u>${k}</u>)</button>`).join('')}`;
    }
}

class SaiWatermark extends SaiElement {
    render() {
        return `
            <style>
                :host { position: absolute; left: 5px; top: 8px; display: flex; gap: 3px; pointer-events: none; opacity: .8; }
                div { padding-top: 6px; }
                p { margin: 0; color: #2488d4; font-size: 27px; font-weight: 900; line-height: 32px; white-space: nowrap; }
                small { display: block; color: #38a02c; font: bold 21px/22px "Liberation Serif", serif; }
            </style>
            <sai-icon name="watermark"></sai-icon>
            <div><p>河东软件园</p><small>www.pc0359.cn</small></div>`;
    }
}

class SaiWindow extends SaiElement {
    render() {
        return `
            <style>
                :host { display: flex; flex-direction: column; height: 100vh; padding: 0 4px 4px; position: relative; color: #000; }
                header { display: flex; align-items: center; height: 24px; flex: none; color: #fff; font: bold 13px "Noto Sans", sans-serif; gap: 6px; padding: 0 2px; }
                header span { flex: 1; }
                header div { display: flex; gap: 3px; }
                main { display: flex; flex: 1; min-height: 0; background: #f8f8f8; }
                .left { display: flex; flex-direction: column; width: 173px; flex: none; border-right: 1px solid #d0d0d0; padding: 4px; position: relative; }
                .handle { position: absolute; right: -2px; top: calc(50% - 9px); width: 3px; height: 16px; background: #808080; border: 1px solid #606060; border-radius: 1px; }
                .mid { display: flex; gap: 4px; width: 224px; flex: none; padding: 4px 0 4px 4px; }
                .scroller { flex: 1; min-width: 0; overflow: hidden; }
                .work { display: flex; flex-direction: column; flex: 1; min-width: 0; padding: 4px; }
                .canvas { flex: 1; border: 1px solid #a0a0a0; border-radius: 2px; padding: 1px; background: #c0c0c0 content-box; }
                footer { display: flex; justify-content: flex-end; align-items: center; gap: 8px; height: 30px; flex: none; border-top: 1px solid #e0e0e0; background: #f8f8f8; padding-right: 3px; }
                .grip { align-self: flex-end; margin-bottom: 3px; }
            </style>
            <header>
                <sai-icon name="app"></sai-icon><span>PaintTool SAI Ver.2 (32bit) Preview.2016.11.19</span>
                <div>
                    <sai-button kind="title" icon="min" label="最小化"></sai-button>
                    <sai-button kind="title" icon="max" label="最大化"></sai-button>
                    <sai-button kind="title" icon="close" label="关闭" danger></sai-button>
                </div>
            </header>
            <sai-menu></sai-menu>
            <main>
                <section class="left">
                    <sai-navigator></sai-navigator>
                    <sai-layers></sai-layers>
                    <div class="handle"></div>
                </section>
                <section class="mid">
                    <div class="scroller">
                        <sai-color-panel></sai-color-panel>
                        <sai-tool-panel></sai-tool-panel>
                        <sai-options></sai-options>
                    </div>
                    <sai-scroll thumb="529 108"></sai-scroll>
                </section>
                <section class="work">
                    <sai-toolbar></sai-toolbar>
                    <div class="canvas"></div>
                </section>
            </main>
            <footer>
                <sai-meter label="内存使用量" value="5" style="--fill: #38e08c">5% (5%)</sai-meter>
                <sai-meter label="磁盘容量" value="40" style="--fill: #40bcff">40%</sai-meter>
                <sai-icon class="grip" name="grip"></sai-icon>
            </footer>
            <sai-watermark></sai-watermark>`;
    }
}

customElements.define('sai-icon', SaiIcon);
customElements.define('sai-button', SaiButton);
customElements.define('sai-select', SaiSelect);
customElements.define('sai-field', SaiField);
customElements.define('sai-check', SaiCheck);
customElements.define('sai-slider', SaiSlider);
customElements.define('sai-rule', SaiRule);
customElements.define('sai-scroll', SaiScroll);
customElements.define('sai-fold', SaiFold);
customElements.define('sai-meter', SaiMeter);
customElements.define('sai-wheel', SaiWheel);
customElements.define('sai-brush', SaiBrush);
customElements.define('sai-navigator', SaiNavigator);
customElements.define('sai-layers', SaiLayers);
customElements.define('sai-color-panel', SaiColorPanel);
customElements.define('sai-tool-panel', SaiToolPanel);
customElements.define('sai-options', SaiOptions);
customElements.define('sai-toolbar', SaiToolbar);
customElements.define('sai-menu', SaiMenu);
customElements.define('sai-watermark', SaiWatermark);
customElements.define('sai-window', SaiWindow);
</script>
</body>
</html>
